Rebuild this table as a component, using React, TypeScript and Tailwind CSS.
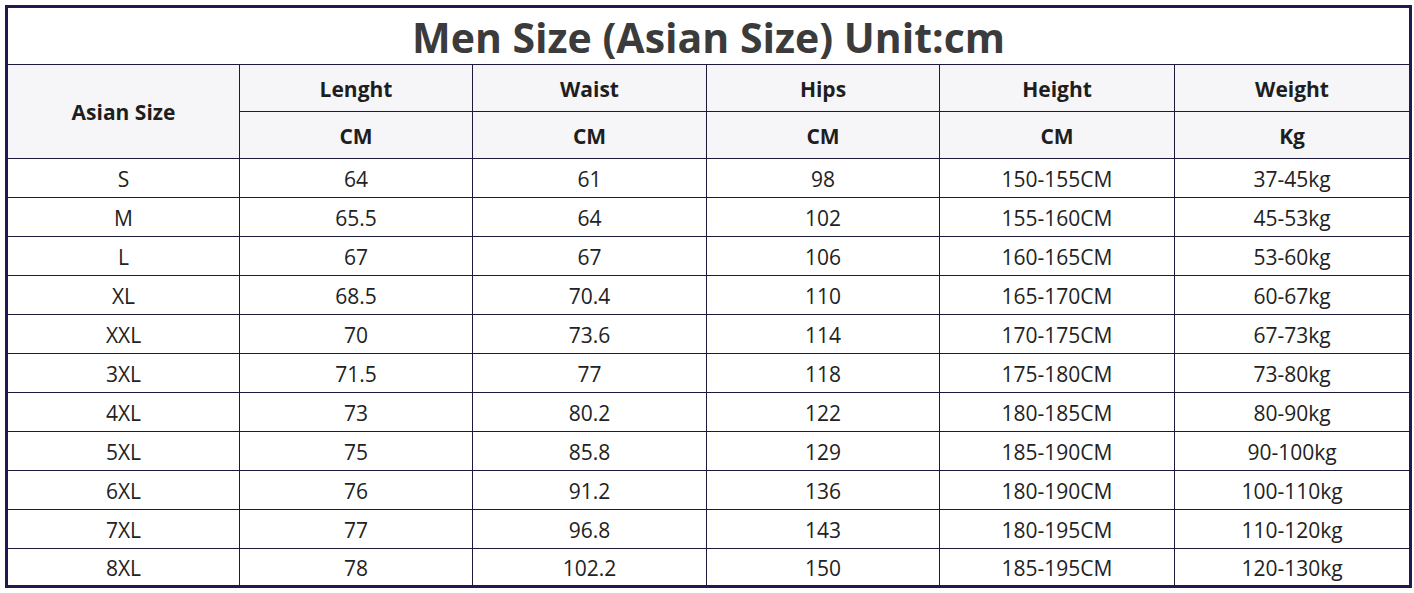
import React from "react";

const rows: string[][] = [
  ["S", "64", "61", "98", "150-155CM", "37-45kg"],
  ["M", "65.5", "64", "102", "155-160CM", "45-53kg"],
  ["L", "67", "67", "106", "160-165CM", "53-60kg"],
  ["XL", "68.5", "70.4", "110", "165-170CM", "60-67kg"],
  ["XXL", "70", "73.6", "114", "170-175CM", "67-73kg"],
  ["3XL", "71.5", "77", "118", "175-180CM", "73-80kg"],
  ["4XL", "73", "80.2", "122", "180-185CM", "80-90kg"],
  ["5XL", "75", "85.8", "129", "185-190CM", "90-100kg"],
  ["6XL", "76", "91.2", "136", "180-190CM", "100-110kg"],
  ["7XL", "77", "96.8", "143", "180-195CM", "110-120kg"],
  ["8XL", "78", "102.2", "150", "185-195CM", "120-130kg"],
];

const cell = "border-[1.5px] border-[#1c1a3c] text-center align-middle p-0";

export default function App() {
  return (
    <div
      className="w-[1414px] h-[593px] bg-white pt-[5px] pl-[5px]"
      style={{ fontFamily: '"Open Sans", "Noto Sans", sans-serif' }}
    >
      <table className="w-[1404px] table-fixed border-collapse border-[3px] border-[#1f1b4e]">
        <colgroup>
          <col className="w-[233px]" />
          <col className="w-[233px]" />
          <col className="w-[234px]" />
          <col className="w-[233px]" />
          <col className="w-[235px]" />
          <col className="w-[236px]" />
        </colgroup>
        <thead>
          <tr className="h-[58px]">
            <th
              colSpan={6}
              className={`${cell} border-t-[3px] border-[#1f1b4e] border-b-[#1c1a3c] text-[41px] font-bold text-[#3b3b3b] leading-none pt-[2px]`}
            >
              Men Size (Asian Size) Unit:cm
            </th>
          </tr>
          <tr className="h-[47px] bg-[#f6f6f8]">
            <th rowSpan={2} className={`${cell} text-[21px] font-bold text-[#1e1e1e] pt-[2px]`}>
              Asian Size
            </th>
            {["Lenght", "Waist", "Hips", "Height", "Weight"].map((h) => (
              <th key={h} className={`${cell} text-[21px] font-bold text-[#1e1e1e] pt-[3px]`}>
                {h}
              </th>
            ))}
          </tr>
          <tr className="h-[47px] bg-[#f6f6f8]">
            {["CM", "CM", "CM", "CM", "Kg"].map((h, i) => (
              <th key={i} className={`${cell} text-[21px] font-bold text-[#1e1e1e] pt-[3px]`}>
                {h}
              </th>
            ))}
          </tr>
        </thead>
        <tbody>
          {rows.map((r, ri) => (
            <tr key={ri} className={ri === rows.length - 1 ? "h-[38px]" : "h-[39px]"}>
              {r.map((v, ci) => (
                <td key={ci} className={`${cell} text-[21px] text-[#222222] leading-none pt-[3px]`}>
                  {v}
                </td>
              ))}
            </tr>
          ))}
        </tbody>
      </table>
    </div>
  );
}
